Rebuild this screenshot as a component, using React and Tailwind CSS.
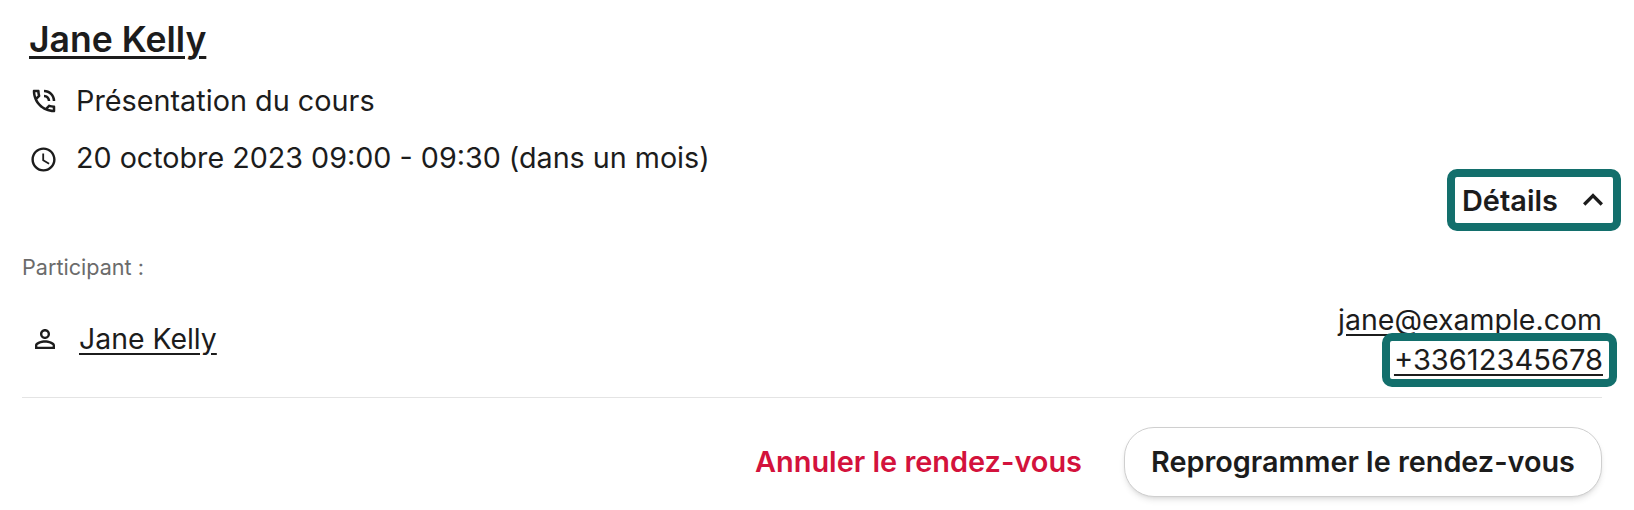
import React from "react";
import { MdOutlinePhoneInTalk, MdAccessTime, MdOutlinePersonOutline, MdExpandLess } from "react-icons/md";

export default function App() {
  return (
    <div className="w-[1634px] h-[510px] overflow-hidden bg-white text-[#1c1c1c] font-['Inter',sans-serif] pl-[22px] pr-[32px] flex flex-col">
      <a className="block pl-[7px] pt-[16px] text-[35.6px] leading-[48px] font-semibold underline decoration-[3px] underline-offset-[4px]">Jane Kelly</a>
      <div className="flex items-center pl-[7px] mt-[8px] h-[57px] text-[28.8px]">
        <MdOutlinePhoneInTalk className="w-[30px] h-[30px] shrink-0" />
        <span className="ml-[17px]">Présentation du cours</span>
      </div>
      <div className="flex items-center pl-[7px] h-[57px] text-[28.7px]">
        <MdAccessTime className="w-[29px] h-[29px] mt-[4px] shrink-0" />
        <span className="ml-[18px]">20 octobre 2023 09:00 - 09:30 (dans un mois)</span>
      </div>
      <div className="flex justify-end -mr-[19px] -mt-[17px]">
        <button className="w-[174px] h-[62px] border-[8px] border-[#136f6c] rounded-[10px] flex items-center justify-between pl-[7px] text-[28.9px] font-semibold">
          <span className="pt-[2px]">Détails</span>
          <MdExpandLess className="w-[40px] h-[40px]" />
        </button>
      </div>
      <div className="mt-[22px] text-[21.6px] leading-[28px] text-[#6b6b6b]">Participant :</div>
      <div className="flex items-center justify-between border-b border-[#e4e4e4] h-[117px]">
        <div className="flex items-center pl-[8px] text-[28.4px]">
          <MdOutlinePersonOutline className="w-[30px] h-[30px] shrink-0" />
          <a className="ml-[19px] underline underline-offset-[4px]">Jane Kelly</a>
        </div>
        <div className="flex flex-col items-end text-[28.5px] leading-[38px] mt-[9px]">
          <a className="underline underline-offset-[4px]">jane@example.com</a>
          <a className="flex items-center text-[29.1px] underline underline-offset-[4px] border-[8px] border-[#136f6c] rounded-[10px] -mr-[15px] -mt-[6px] h-[54px] pl-[4px] pr-[6px]">+33612345678</a>
        </div>
      </div>
      <div className="flex items-center justify-end mt-[29px]">
        <button className="text-[28.9px] font-semibold text-[#d3123c] mr-[42px]">Annuler le rendez-vous</button>
        <button className="w-[478px] h-[70px] rounded-[30px] border border-[#cfcfcf] bg-white shadow-md text-[28.8px] font-semibold">Reprogrammer le rendez-vous</button>
      </div>
    </div>
  );
}
